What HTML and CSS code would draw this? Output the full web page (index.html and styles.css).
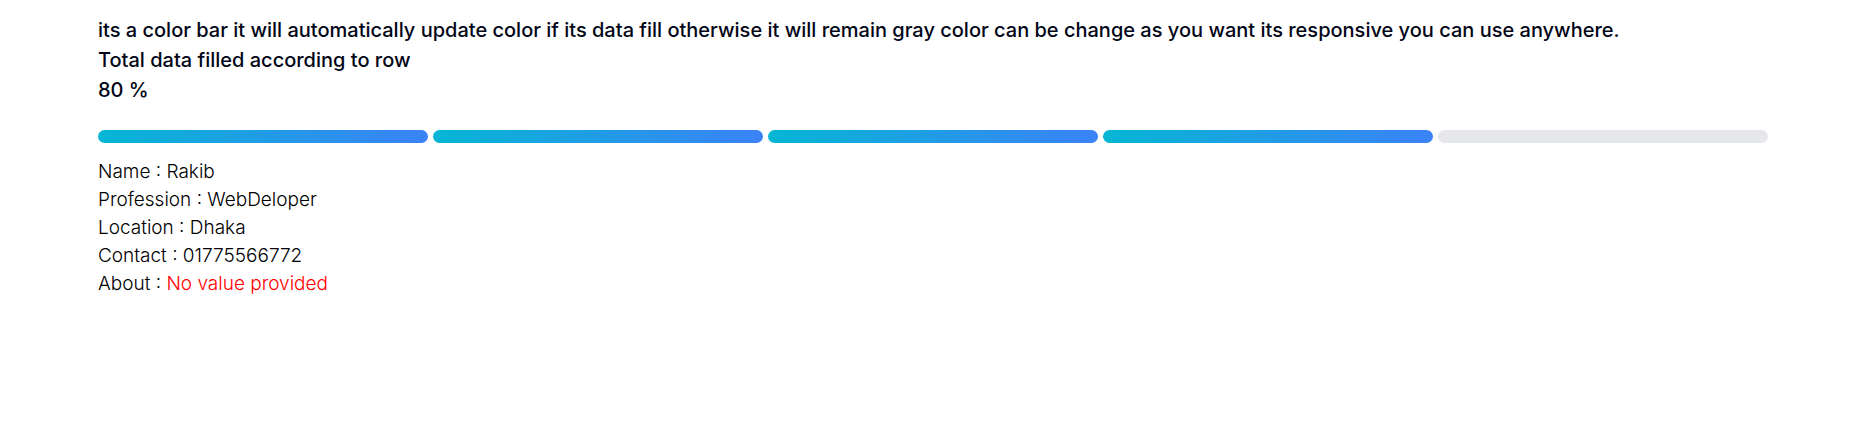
FILE: index.html
```
<!DOCTYPE html>
<html lang="en">
<head>
<meta charset="utf-8">
<meta name="viewport" content="width=device-width, initial-scale=1">
<title>Color bar</title>
<link rel="stylesheet" href="styles.css">
</head>
<body>
<main class="page">
  <header class="intro">
    <p>its a color bar it will automatically update color if its data fill otherwise it will remain gray color can be change as you want its responsive you can use anywhere.</p>
    <p>Total data filled according to row</p>
    <p>80 %</p>
  </header>
  <div class="bar" role="img" aria-label="80 % filled">
    <span class="segment filled"></span>
    <span class="segment filled"></span>
    <span class="segment filled"></span>
    <span class="segment filled"></span>
    <span class="segment"></span>
  </div>
  <div class="details">
    <p>Name : Rakib</p>
    <p>Profession : WebDeloper</p>
    <p>Location : Dhaka</p>
    <p>Contact : 01775566772</p>
    <p>About : <span class="missing">No value provided</span></p>
  </div>
</main>
</body>
</html>
```
FILE: styles.css
```
* { box-sizing: border-box; }
body {
  margin: 0;
  background: #fff;
  color: #020617;
  font-family: Inter, "Liberation Sans", sans-serif;
}
p { margin: 0; }
.page { padding: 15px 83px 15px 98px; }
.intro {
  font-size: 20px;
  line-height: 30px;
  font-weight: 500;
}
.bar {
  display: flex;
  gap: 5px;
  margin: 25px 0 15px;
}
.segment {
  flex: 1;
  height: 13px;
  border-radius: 7px;
  background: #e5e7eb;
}
.filled { background: linear-gradient(to right, #06b6d4, #3b82f6); }
.details {
  color: #000;
  font-size: 19px;
  line-height: 28px;
  font-weight: 300;
}
.missing { color: #f00; }
```
